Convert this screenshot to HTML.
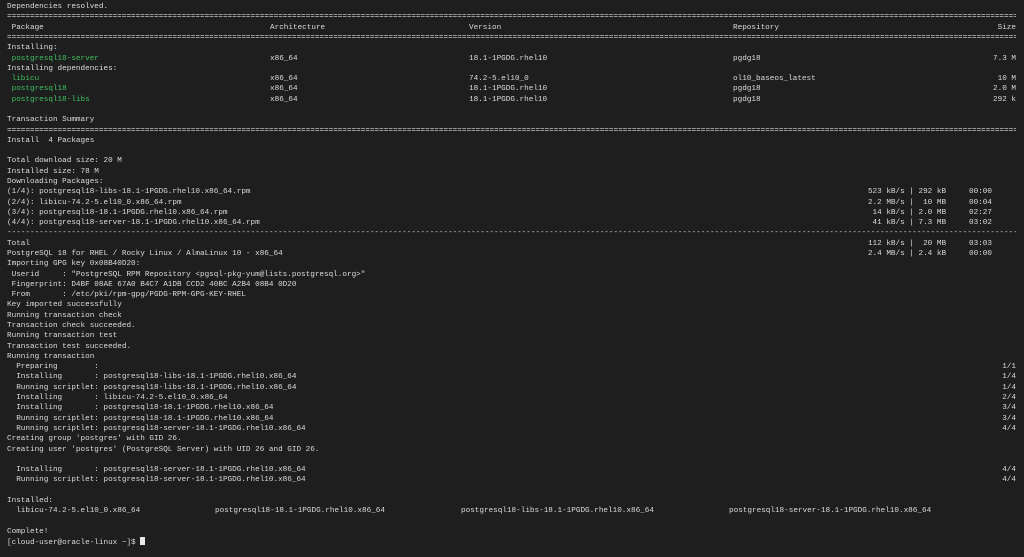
<!DOCTYPE html>
<html><head><meta charset="utf-8">
<style>
html,body{margin:0;padding:0;background:#1e1e1f;width:1024px;height:557px;overflow:hidden}
body{font-family:"Liberation Mono","DejaVu Sans Mono",monospace;font-size:7.67px;color:#dcdcdc;position:relative}
.l{position:absolute;left:0;width:1024px;height:10.29px;line-height:10.29px;white-space:pre;margin-top:1px}
.l span{position:absolute;top:0;white-space:pre}
.g{color:#3fc05e}
.eq{position:absolute;left:7px;width:1009px;overflow:hidden;white-space:pre}
.cur{display:inline-block;width:4.6px;height:8px;background:#e8e8e8;vertical-align:-1px}
</style></head><body>
<div class="l" style="top:1px"><span style="left:7px">Dependencies resolved.</span></div>
<div class="l" style="top:11.3px"><span class="eq">===========================================================================================================================================================================================================================================</span></div>
<div class="l" style="top:21.6px"><span style="left:11.6px">Package</span><span style="left:270px">Architecture</span><span style="left:469px">Version</span><span style="left:733px">Repository</span><span style="right:8px">Size</span></div>
<div class="l" style="top:31.9px"><span class="eq">===========================================================================================================================================================================================================================================</span></div>
<div class="l" style="top:42.2px"><span style="left:7px">Installing:</span></div>
<div class="l" style="top:52.5px"><span class="g" style="left:11.6px">postgresql18-server</span><span style="left:270px">x86_64</span><span style="left:469px">18.1-1PGDG.rhel10</span><span style="left:733px">pgdg18</span><span style="right:8px">7.3 M</span></div>
<div class="l" style="top:62.7px"><span style="left:7px">Installing dependencies:</span></div>
<div class="l" style="top:73px"><span class="g" style="left:11.6px">libicu</span><span style="left:270px">x86_64</span><span style="left:469px">74.2-5.el10_0</span><span style="left:733px">ol10_baseos_latest</span><span style="right:8px">10 M</span></div>
<div class="l" style="top:83.3px"><span class="g" style="left:11.6px">postgresql18</span><span style="left:270px">x86_64</span><span style="left:469px">18.1-1PGDG.rhel10</span><span style="left:733px">pgdg18</span><span style="right:8px">2.0 M</span></div>
<div class="l" style="top:93.6px"><span class="g" style="left:11.6px">postgresql18-libs</span><span style="left:270px">x86_64</span><span style="left:469px">18.1-1PGDG.rhel10</span><span style="left:733px">pgdg18</span><span style="right:8px">292 k</span></div>
<div class="l" style="top:114.2px"><span style="left:7px">Transaction Summary</span></div>
<div class="l" style="top:124.5px"><span class="eq">===========================================================================================================================================================================================================================================</span></div>
<div class="l" style="top:134.8px"><span style="left:7px">Install  4 Packages</span></div>
<div class="l" style="top:155.4px"><span style="left:7px">Total download size: 20 M</span></div>
<div class="l" style="top:165.6px"><span style="left:7px">Installed size: 78 M</span></div>
<div class="l" style="top:175.9px"><span style="left:7px">Downloading Packages:</span></div>
<div class="l" style="top:186.2px"><span style="left:7px">(1/4): postgresql18-libs-18.1-1PGDG.rhel10.x86_64.rpm</span><span style="right:32px">523 kB/s | 292 kB     00:00</span></div>
<div class="l" style="top:196.5px"><span style="left:7px">(2/4): libicu-74.2-5.el10_0.x86_64.rpm</span><span style="right:32px">2.2 MB/s |  10 MB     00:04</span></div>
<div class="l" style="top:206.8px"><span style="left:7px">(3/4): postgresql18-18.1-1PGDG.rhel10.x86_64.rpm</span><span style="right:32px"> 14 kB/s | 2.0 MB     02:27</span></div>
<div class="l" style="top:217.1px"><span style="left:7px">(4/4): postgresql18-server-18.1-1PGDG.rhel10.x86_64.rpm</span><span style="right:32px"> 41 kB/s | 7.3 MB     03:02</span></div>
<div class="l" style="top:227.4px"><span class="eq">-------------------------------------------------------------------------------------------------------------------------------------------------------------------------------------------------------------------------------------------</span></div>
<div class="l" style="top:237.7px"><span style="left:7px">Total</span><span style="right:32px">112 kB/s |  20 MB     03:03</span></div>
<div class="l" style="top:248px"><span style="left:7px">PostgreSQL 18 for RHEL / Rocky Linux / AlmaLinux 10 - x86_64</span><span style="right:32px">2.4 MB/s | 2.4 kB     00:00</span></div>
<div class="l" style="top:258.3px"><span style="left:7px">Importing GPG key 0x08B40D20:</span></div>
<div class="l" style="top:268.5px"><span style="left:7px"> Userid     : "PostgreSQL RPM Repository &lt;pgsql-pkg-yum@lists.postgresql.org&gt;"</span></div>
<div class="l" style="top:278.8px"><span style="left:7px"> Fingerprint: D4BF 08AE 67A0 B4C7 A1DB CCD2 40BC A2B4 08B4 0D20</span></div>
<div class="l" style="top:289.1px"><span style="left:7px"> From       : /etc/pki/rpm-gpg/PGDG-RPM-GPG-KEY-RHEL</span></div>
<div class="l" style="top:299.4px"><span style="left:7px">Key imported successfully</span></div>
<div class="l" style="top:309.7px"><span style="left:7px">Running transaction check</span></div>
<div class="l" style="top:320px"><span style="left:7px">Transaction check succeeded.</span></div>
<div class="l" style="top:330.3px"><span style="left:7px">Running transaction test</span></div>
<div class="l" style="top:340.6px"><span style="left:7px">Transaction test succeeded.</span></div>
<div class="l" style="top:350.9px"><span style="left:7px">Running transaction</span></div>
<div class="l" style="top:361.2px"><span style="left:7px">  Preparing        :</span><span style="right:8px">1/1</span></div>
<div class="l" style="top:371.4px"><span style="left:7px">  Installing       : postgresql18-libs-18.1-1PGDG.rhel10.x86_64</span><span style="right:8px">1/4</span></div>
<div class="l" style="top:381.7px"><span style="left:7px">  Running scriptlet: postgresql18-libs-18.1-1PGDG.rhel10.x86_64</span><span style="right:8px">1/4</span></div>
<div class="l" style="top:392px"><span style="left:7px">  Installing       : libicu-74.2-5.el10_0.x86_64</span><span style="right:8px">2/4</span></div>
<div class="l" style="top:402.3px"><span style="left:7px">  Installing       : postgresql18-18.1-1PGDG.rhel10.x86_64</span><span style="right:8px">3/4</span></div>
<div class="l" style="top:412.6px"><span style="left:7px">  Running scriptlet: postgresql18-18.1-1PGDG.rhel10.x86_64</span><span style="right:8px">3/4</span></div>
<div class="l" style="top:422.9px"><span style="left:7px">  Running scriptlet: postgresql18-server-18.1-1PGDG.rhel10.x86_64</span><span style="right:8px">4/4</span></div>
<div class="l" style="top:433.2px"><span style="left:7px">Creating group 'postgres' with GID 26.</span></div>
<div class="l" style="top:443.5px"><span style="left:7px">Creating user 'postgres' (PostgreSQL Server) with UID 26 and GID 26.</span></div>
<div class="l" style="top:464.1px"><span style="left:7px">  Installing       : postgresql18-server-18.1-1PGDG.rhel10.x86_64</span><span style="right:8px">4/4</span></div>
<div class="l" style="top:474.3px"><span style="left:7px">  Running scriptlet: postgresql18-server-18.1-1PGDG.rhel10.x86_64</span><span style="right:8px">4/4</span></div>
<div class="l" style="top:494.9px"><span style="left:7px">Installed:</span></div>
<div class="l" style="top:505.2px"><span style="left:16.2px">libicu-74.2-5.el10_0.x86_64</span><span style="left:215px">postgresql18-18.1-1PGDG.rhel10.x86_64</span><span style="left:461px">postgresql18-libs-18.1-1PGDG.rhel10.x86_64</span><span style="left:729px">postgresql18-server-18.1-1PGDG.rhel10.x86_64</span></div>
<div class="l" style="top:525.8px"><span style="left:7px">Complete!</span></div>
<div class="l" style="top:536.1px"><span style="left:7px">[cloud-user@oracle-linux ~]$ <span class="cur" style="position:static"></span></span></div>
</body></html>
